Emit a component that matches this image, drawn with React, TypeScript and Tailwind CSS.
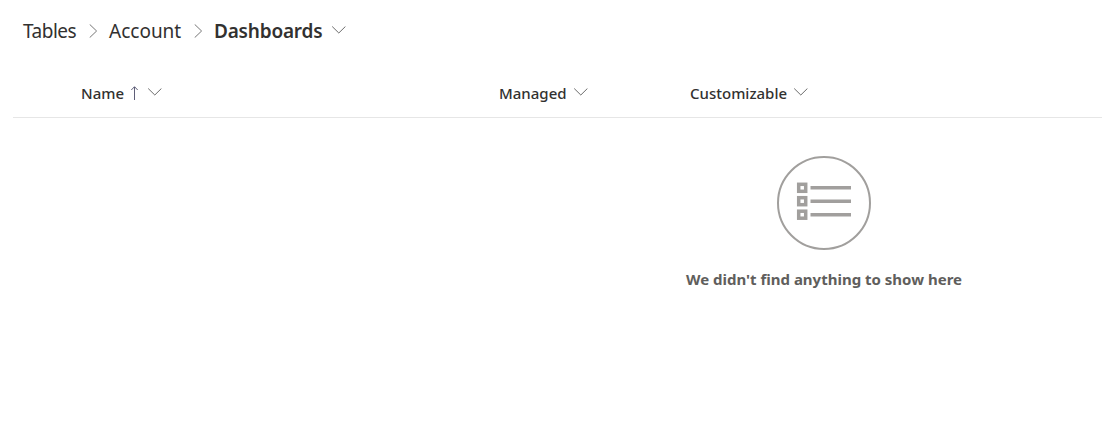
import React from "react";

function ChevronRight() {
  return (
    <svg className="block h-[14px] w-[9px] shrink-0" viewBox="0 0 9 14" fill="none" stroke="#777777">
      <path d="M0.7 0.4L7.6 7L0.7 13.6" />
    </svg>
  );
}

function ChevronDown() {
  return (
    <svg className="block h-[8px] w-[14px] shrink-0" viewBox="0 0 14 8" fill="none" stroke="#6b6b6b">
      <path d="M0.2 0.5L6.8 7L13.4 0.5" />
    </svg>
  );
}

function SortUp() {
  return (
    <svg className="block h-[14px] w-[8px] shrink-0" viewBox="0 0 8 14" fill="none" stroke="#5f5f78">
      <path d="M3.5 14V1M0.3 4L3.5 0.7L6.7 4" />
    </svg>
  );
}

function EmptyListIcon() {
  return (
    <svg className="block h-[94px] w-[94px]" viewBox="0 0 94 94" fill="none" stroke="#a19f9d">
      <circle cx="47" cy="47" r="46" strokeWidth="2" />
      <g strokeWidth="3.5">
        <rect x="21.7" y="28.3" width="7" height="7" />
        <rect x="21.7" y="41.7" width="7" height="7" />
        <rect x="21.7" y="55.2" width="7" height="7" />
        <path d="M33.5 31.8H74M33.5 45.2H74M33.5 58.7H74" />
      </g>
    </svg>
  );
}

export default function App() {
  return (
    <div className="h-[435px] w-full overflow-hidden bg-white font-['Noto_Sans','Open_Sans',sans-serif] text-[#323130]">
      <nav className="flex h-[62px] items-center pl-[23px] text-[19px] leading-7 whitespace-nowrap">
        <span className="w-[66px] tracking-[-0.5px]">Tables</span>
        <ChevronRight />
        <span className="ml-[11px] w-[85px]">Account</span>
        <ChevronRight />
        <span className="ml-[11px] w-[118px] font-semibold tracking-[-0.2px]">Dashboards</span>
        <div className="-mt-[2px]"><ChevronDown /></div>
      </nav>
      <div className="ml-[13px] flex h-[56px] items-center border-b border-[#e6e6e6] pl-[68px] text-[15px] leading-5 font-medium whitespace-nowrap">
        <div className="flex w-[418px] items-center pt-[7px]">
          <span className="w-[50px]">Name</span>
          <SortUp />
          <div className="-mt-[2px] ml-[9px]"><ChevronDown /></div>
        </div>
        <div className="flex w-[191px] items-center pt-[7px]">
          <span className="w-[75px]">Managed</span>
          <div className="-mt-[2px]"><ChevronDown /></div>
        </div>
        <div className="flex items-center pt-[7px]">
          <span className="w-[104px]">Customizable</span>
          <div className="-mt-[2px]"><ChevronDown /></div>
        </div>
      </div>
      <div className="ml-[624px] flex w-[400px] flex-col items-center pt-[38px]">
        <EmptyListIcon />
        <p className="mt-[19px] text-[15px] leading-5 font-bold whitespace-nowrap text-[#605e5c]">We didn't find anything to show here</p>
      </div>
    </div>
  );
}
